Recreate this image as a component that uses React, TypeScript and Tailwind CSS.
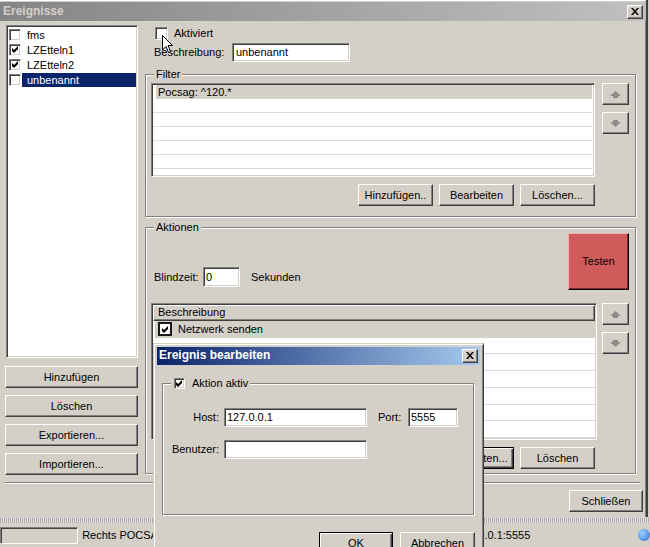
import type { ReactNode } from 'react';

const raised =
  'border border-t-white border-l-white border-r-[#404040] border-b-[#404040] shadow-[inset_-1px_-1px_0_#808080] bg-[#d4d0c8]';
const defaultBtn =
  'border border-black shadow-[inset_1px_1px_0_#fff,inset_-1px_-1px_0_#404040,inset_-2px_-2px_0_#808080] bg-[#d4d0c8]';
const sunkenEdge =
  'border border-t-[#808080] border-l-[#808080] border-r-white border-b-white shadow-[inset_1px_1px_0_#404040,inset_-1px_-1px_0_#d4d0c8]';
const sunken = `${sunkenEdge} bg-white`;

const events = [
  { name: 'fms', checked: false },
  { name: 'LZEtteln1', checked: true },
  { name: 'LZEtteln2', checked: true },
  { name: 'unbenannt', checked: false, selected: true },
];

function Check() {
  return (
    <svg width="7" height="7" viewBox="0 0 7 7">
      <path d="M0 2 L2 4 L6 0 L6 3 L2 7 L0 5 Z" fill="#000" />
    </svg>
  );
}

function Box({ checked, size = 'w-[13px] h-[13px]' }: { checked?: boolean; size?: string }) {
  return (
    <span className={`${sunken} ${size} flex items-center justify-center shrink-0`}>
      {checked && <Check />}
    </span>
  );
}

function Btn({ children, w = 'w-[75px]', def = false }: { children: ReactNode; w?: string; def?: boolean }) {
  return (
    <button
      type="button"
      className={`${def ? defaultBtn : raised} ${w} h-[22px] flex items-center justify-center shrink-0`}
    >
      {children}
    </button>
  );
}

function CloseX() {
  return (
    <svg width="8" height="7" viewBox="0 0 8 7">
      <path d="M0 0h2l2 2.5L6 0h2L5 3.5 8 7H6L4 4.5 2 7H0l3-3.5z" fill="#000" />
    </svg>
  );
}

function CloseBtn() {
  return (
    <button type="button" className={`${raised} w-[16px] h-[14px] flex items-center justify-center`}>
      <CloseX />
    </button>
  );
}

function ArrowBtn({ up }: { up?: boolean }) {
  return (
    <button type="button" className={`${raised} w-[27px] h-[22px] flex items-center justify-center`}>
      <svg width="11" height="7" viewBox="0 0 11 7">
        <path
          d={up ? 'M5.5 0 L11 5 H8 V7 H3 V5 H0 Z' : 'M3 0 H8 V2 H11 L5.5 7 L0 2 H3 Z'}
          fill="#8c8c8c"
        />
      </svg>
    </button>
  );
}

function Group({ legend, className, children }: { legend: ReactNode; className: string; children: ReactNode }) {
  return (
    <div className={`relative border border-[#808080] shadow-[1px_1px_0_#fff,inset_1px_1px_0_#fff] ${className}`}>
      <div className="absolute -top-[7px] left-[8px] h-[13px] bg-[#d4d0c8] px-[2px] flex items-center">{legend}</div>
      {children}
    </div>
  );
}

export default function App() {
  return (
    <div className="relative w-[650px] h-[547px] overflow-hidden bg-[#d4d0c8] font-['Liberation_Sans',Arial,sans-serif] text-[11px] leading-[13px] text-black">
      {/* Ereignisse window */}
      <div className="w-[648px] h-[517px] pt-[2px] flex flex-col border-r-2 border-r-[#404040] shadow-[inset_0_1px_0_#fff,inset_-1px_0_0_#808080]">
        <div className="h-[19px] flex items-center justify-between pl-[3px] pr-[3px] bg-[linear-gradient(to_right,#858585,#c0c0c0)]">
          <span className="font-bold text-[#d4d0c8] text-[12px]">Ereignisse</span>
          <CloseBtn />
        </div>

        <div className="flex">
          {/* left column */}
          <div className="ml-[5px] w-[133px] mt-[4px] flex flex-col">
            <div className={`${sunken} ml-[1px] w-[132px] h-[333px] pt-[1px] pl-[2px] flex flex-col`}>
              {events.map(ev => (
                <div key={ev.name} className="h-[15px] flex items-center">
                  <Box checked={ev.checked} size="w-[12px] h-[12px]" />
                  <span
                    className={`ml-[1px] pl-[5px] h-[14px] leading-[14px] flex-1 mr-[1px] ${
                      ev.selected ? 'bg-[#0a246a] text-white' : ''
                    }`}
                  >
                    {ev.name}
                  </span>
                </div>
              ))}
            </div>
            <div className="mt-[8px] flex flex-col gap-[7px]">
              <Btn w="w-[133px]">Hinzufügen</Btn>
              <Btn w="w-[133px]">Löschen</Btn>
              <Btn w="w-[133px]">Exportieren...</Btn>
              <Btn w="w-[133px]">Importieren...</Btn>
            </div>
          </div>

          {/* right column */}
          <div className="ml-[7px] w-[491px] flex flex-col">
            <div className="mt-[6px] pl-[10px] h-[13px] flex items-center">
              <Box />
              <span className="ml-[6px]">Aktiviert</span>
            </div>
            <div className="mt-[3px] pl-[9px] flex items-center">
              <span className="w-[78px]">Beschreibung:</span>
              <div className={`${sunken} w-[118px] h-[19px] pl-[3px] flex items-center`}>unbenannt</div>
            </div>

            <Group legend="Filter" className="mt-[12px] h-[143px]">
              <div className="pt-[8px] pl-[5px] flex">
                <div className={`${sunken} w-[444px] h-[94px] p-[1px] flex flex-col`}>
                  <div className="ml-[3px] mr-[1px] h-[14px] pl-[2px] bg-[#d4d0c8] flex items-center">Pocsag: ^120.*</div>
                  {[0, 1, 2, 3, 4].map(i => (
                    <div key={i} className="h-[14px] mr-[1px] border-b border-[#dcdcdc]" />
                  ))}
                </div>
                <div className="ml-[7px] flex flex-col gap-[7px]">
                  <ArrowBtn up />
                  <ArrowBtn />
                </div>
              </div>
              <div className="mt-[7px] pr-[40px] flex justify-end gap-[6px]">
                <Btn>Hinzufügen..</Btn>
                <Btn>Bearbeiten</Btn>
                <Btn>Löschen...</Btn>
              </div>
            </Group>

            <Group legend="Aktionen" className="mt-[10px] h-[247px]">
              <div className="pt-[5px] pl-[8px] pr-[6px] flex items-end justify-between">
                <div className="mb-[3px] flex items-center">
                  <span className="w-[49px]">Blindzeit:</span>
                  <div className={`${sunken} w-[37px] h-[20px] pl-[2px] flex items-center`}>0</div>
                  <span className="ml-[11px]">Sekunden</span>
                </div>
                <button
                  type="button"
                  className="w-[61px] h-[57px] bg-[#cf5b5b] border border-t-[#f2b0b0] border-l-[#f2b0b0] border-r-black border-b-black shadow-[inset_-1px_-1px_0_#7a2a2a] flex items-center justify-center"
                >
                  Testen
                </button>
              </div>
              <div className="mt-[13px] pl-[5px] flex">
                <div className={`${sunken} w-[446px] h-[137px] p-[1px] flex flex-col`}>
                  <div className={`${raised} h-[16px] pl-[4px] flex items-center`}>Beschreibung</div>
                  <div className="ml-[2px] h-[17px] pl-[3px] bg-[#d4d0c8] flex items-center gap-[6px]">
                    <span className="w-[14px] h-[14px] border-2 border-[#1a1a1a] bg-white flex items-center justify-center">
                      <Check />
                    </span>
                    Netzwerk senden
                  </div>
                  {[0, 1, 2, 3, 4, 5].map(i => (
                    <div key={i} className="h-[17px] border-b border-[#dcdcdc]" />
                  ))}
                </div>
                <div className="ml-[5px] flex flex-col gap-[7px]">
                  <ArrowBtn up />
                  <ArrowBtn />
                </div>
              </div>
              <div className="mt-[7px] pr-[40px] flex justify-end gap-[6px]">
                <Btn>Hinzufügen...</Btn>
                <Btn def>Bearbeiten...</Btn>
                <Btn>Löschen</Btn>
              </div>
            </Group>
          </div>
        </div>

        <div className="mt-[7px] ml-[5px] w-[635px] h-[2px] border-t border-t-[#808080] border-b border-b-white" />
        <div className="mt-[6px] pr-[3px] flex justify-end">
          <Btn w="w-[74px]">Schließen</Btn>
        </div>
      </div>

      {/* status bar of the main application */}
      <div className="h-[30px] flex flex-col">
        <div className="mt-[1px] h-[5px] bg-[repeating-linear-gradient(90deg,#a8a8a8_0_1px,#e4e4e4_1px_2px)]" />
        <div className="mt-[3px] h-[18px] flex items-center">
          <div className={`${sunkenEdge} bg-[#d4d0c8] w-[79px] h-[17px]`} />
          <div className="ml-[4px] w-[378px] overflow-hidden whitespace-nowrap">Rechts POCSAG 512/1200/2400</div>
          <div className="ml-[1px] w-[170px] overflow-hidden whitespace-nowrap">127.0.0.1:5555</div>
          <span className="ml-[13px] w-[12px] h-[12px] rounded-full bg-[radial-gradient(circle_at_35%_35%,#9fd0ff,#2a6fd0)] shrink-0" />
        </div>
      </div>

      {/* mouse pointer over "Aktiviert" */}
      <svg className="absolute left-[162px] top-[35px]" width="12" height="19" viewBox="0 0 12 19">
        <path d="M0.5 0.5 V15 L4 11.5 L6.5 17.5 L8.5 16.5 L6 10.5 H10.5 Z" fill="#fff" stroke="#000" />
      </svg>

      {/* Ereignis bearbeiten dialog */}
      <div className="absolute left-[153px] top-[343px] w-[331px] h-[215px] bg-[#d4d0c8] border border-t-[#d4d0c8] border-l-[#d4d0c8] border-r-[#404040] border-b-[#404040] shadow-[inset_1px_1px_0_#fff,inset_-1px_-1px_0_#808080] p-[3px] flex flex-col">
        <div className="h-[18px] flex items-center justify-between pl-[2px] pr-[2px] bg-[linear-gradient(to_right,#0a246a,#a6caf0)]">
          <span className="text-white font-bold text-[12px]">Ereignis bearbeiten</span>
          <CloseBtn />
        </div>
        <Group
          className="mt-[18px] ml-[5px] w-[312px] h-[134px]"
          legend={
            <span className="flex items-center gap-[7px] pl-[1px]">
              <Box checked size="w-[11px] h-[11px]" />
              Aktion aktiv
            </span>
          }
        >
          <div className="pt-[24px] flex items-center">
            <span className="w-[56px] text-right">Host:</span>
            <div className={`${sunken} ml-[5px] w-[143px] h-[19px] pl-[2px] flex items-center`}>127.0.0.1</div>
            <span className="ml-[11px] w-[30px]">Port:</span>
            <div className={`${sunken} w-[50px] h-[19px] pl-[2px] flex items-center`}>5555</div>
          </div>
          <div className="mt-[13px] flex items-center">
            <span className="w-[56px] text-right">Benutzer:</span>
            <div className={`${sunken} ml-[5px] w-[143px] h-[19px]`} />
          </div>
        </Group>
        <div className="mt-[17px] pr-[5px] flex justify-end gap-[7px]">
          <Btn w="w-[74px]" def>
            OK
          </Btn>
          <Btn>Abbrechen</Btn>
        </div>
      </div>
    </div>
  );
}
